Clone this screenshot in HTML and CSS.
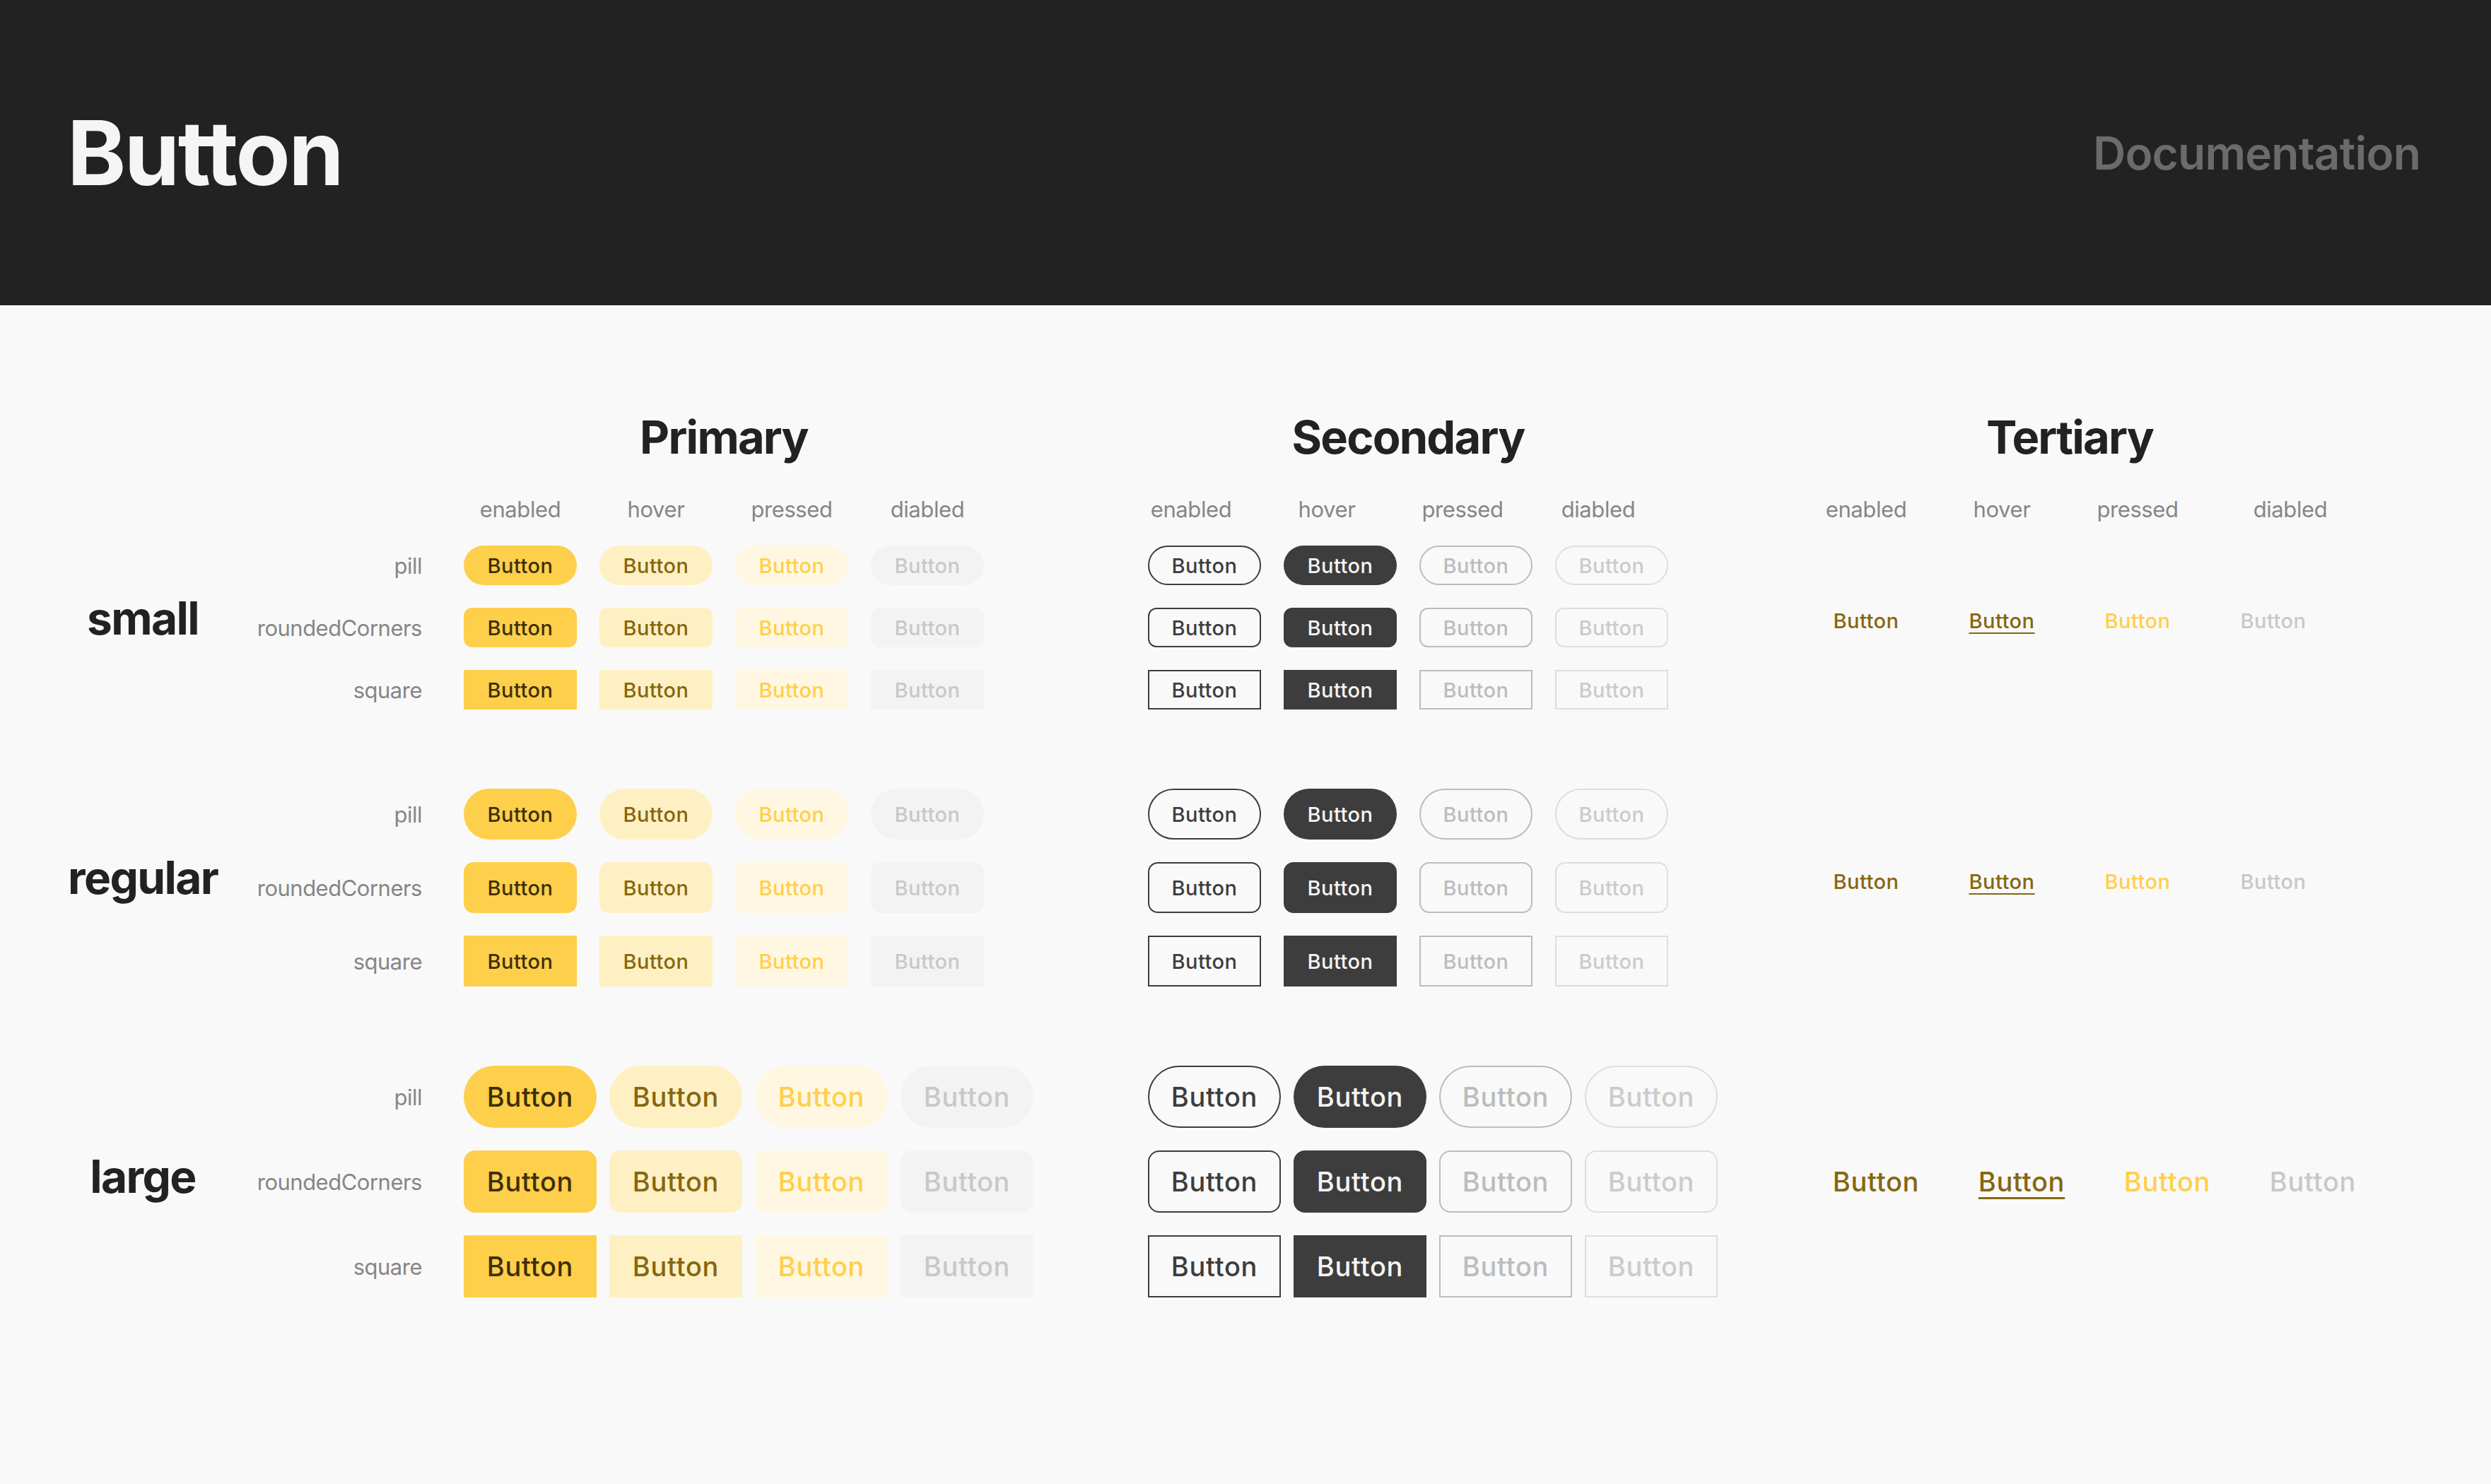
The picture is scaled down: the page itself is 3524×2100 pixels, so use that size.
FILE: index.html
```html
<!DOCTYPE html>
<html lang="en">
<head>
<meta charset="utf-8">
<title>Button</title>
<link rel="stylesheet" href="styles.css">
</head>
<body>
<header class="top">
  <h1 class="top__title">Button</h1>
  <span class="top__link">Documentation</span>
</header>
<main class="sheet">
  <div class="heads">
    <div class="heads__spacer"></div>
    <div class="ghead">
      <h2 class="ghead__title">Primary</h2>
      <div class="states"><span>enabled</span><span>hover</span><span>pressed</span><span>diabled</span></div>
    </div>
    <div class="ghead ghead--secondary">
      <h2 class="ghead__title">Secondary</h2>
      <div class="states states--shift"><span>enabled</span><span>hover</span><span>pressed</span><span>diabled</span></div>
    </div>
    <div class="ghead ghead--tertiary">
      <h2 class="ghead__title">Tertiary</h2>
      <div class="states"><span>enabled</span><span>hover</span><span>pressed</span><span class="states__far">diabled</span></div>
    </div>
  </div>

  <section class="size size--small">
    <div class="size__name">small</div>
    <div class="variants"><span>pill</span><span>roundedCorners</span><span>square</span></div>
    <div class="group group--primary">
      <div class="btn pill p-en">Button</div><div class="btn pill p-hv">Button</div><div class="btn pill p-pr">Button</div><div class="btn pill p-di">Button</div>
      <div class="btn rnd p-en">Button</div><div class="btn rnd p-hv">Button</div><div class="btn rnd p-pr">Button</div><div class="btn rnd p-di">Button</div>
      <div class="btn sq p-en">Button</div><div class="btn sq p-hv">Button</div><div class="btn sq p-pr">Button</div><div class="btn sq p-di">Button</div>
    </div>
    <div class="group group--secondary">
      <div class="btn pill s-en">Button</div><div class="btn pill s-hv">Button</div><div class="btn pill s-pr">Button</div><div class="btn pill s-di">Button</div>
      <div class="btn rnd s-en">Button</div><div class="btn rnd s-hv">Button</div><div class="btn rnd s-pr">Button</div><div class="btn rnd s-di">Button</div>
      <div class="btn sq s-en">Button</div><div class="btn sq s-hv">Button</div><div class="btn sq s-pr">Button</div><div class="btn sq s-di">Button</div>
    </div>
    <div class="group group--tertiary">
      <div class="btn t-en">Button</div><div class="btn t-hv"><span class="t-line">Button</span></div><div class="btn t-pr">Button</div><div class="btn t-di">Button</div>
    </div>
  </section>

  <section class="size size--regular">
    <div class="size__name">regular</div>
    <div class="variants"><span>pill</span><span>roundedCorners</span><span>square</span></div>
    <div class="group group--primary">
      <div class="btn pill p-en">Button</div><div class="btn pill p-hv">Button</div><div class="btn pill p-pr">Button</div><div class="btn pill p-di">Button</div>
      <div class="btn rnd p-en">Button</div><div class="btn rnd p-hv">Button</div><div class="btn rnd p-pr">Button</div><div class="btn rnd p-di">Button</div>
      <div class="btn sq p-en">Button</div><div class="btn sq p-hv">Button</div><div class="btn sq p-pr">Button</div><div class="btn sq p-di">Button</div>
    </div>
    <div class="group group--secondary">
      <div class="btn pill s-en">Button</div><div class="btn pill s-hv">Button</div><div class="btn pill s-pr">Button</div><div class="btn pill s-di">Button</div>
      <div class="btn rnd s-en">Button</div><div class="btn rnd s-hv">Button</div><div class="btn rnd s-pr">Button</div><div class="btn rnd s-di">Button</div>
      <div class="btn sq s-en">Button</div><div class="btn sq s-hv">Button</div><div class="btn sq s-pr">Button</div><div class="btn sq s-di">Button</div>
    </div>
    <div class="group group--tertiary">
      <div class="btn t-en">Button</div><div class="btn t-hv"><span class="t-line">Button</span></div><div class="btn t-pr">Button</div><div class="btn t-di">Button</div>
    </div>
  </section>

  <section class="size size--large">
    <div class="size__name">large</div>
    <div class="variants"><span>pill</span><span>roundedCorners</span><span>square</span></div>
    <div class="group group--primary">
      <div class="btn pill p-en">Button</div><div class="btn pill p-hv">Button</div><div class="btn pill p-pr">Button</div><div class="btn pill p-di">Button</div>
      <div class="btn rnd p-en">Button</div><div class="btn rnd p-hv">Button</div><div class="btn rnd p-pr">Button</div><div class="btn rnd p-di">Button</div>
      <div class="btn sq p-en">Button</div><div class="btn sq p-hv">Button</div><div class="btn sq p-pr">Button</div><div class="btn sq p-di">Button</div>
    </div>
    <div class="group group--secondary">
      <div class="btn pill s-en">Button</div><div class="btn pill s-hv">Button</div><div class="btn pill s-pr">Button</div><div class="btn pill s-di">Button</div>
      <div class="btn rnd s-en">Button</div><div class="btn rnd s-hv">Button</div><div class="btn rnd s-pr">Button</div><div class="btn rnd s-di">Button</div>
      <div class="btn sq s-en">Button</div><div class="btn sq s-hv">Button</div><div class="btn sq s-pr">Button</div><div class="btn sq s-di">Button</div>
    </div>
    <div class="group group--tertiary">
      <div class="btn t-en">Button</div><div class="btn t-hv"><span class="t-line">Button</span></div><div class="btn t-pr">Button</div><div class="btn t-di">Button</div>
    </div>
  </section>
</main>
</body>
</html>
```
FILE: styles.css
```css
* { box-sizing: border-box; }
html, body { margin: 0; padding: 0; }
body {
  background: #f9f9f9;
  font-family: Inter, "Noto Sans", "Liberation Sans", sans-serif;
  color: #222222;
  min-height: 2100px;
}

/* header */
.top {
  height: 432px;
  background: #222222;
  display: flex;
  align-items: center;
  justify-content: space-between;
  padding: 0 100px 0 95px;
}
.top__title {
  margin: 0;
  font-size: 126px;
  line-height: 1;
  font-weight: 700;
  color: #f5f5f5;
  letter-spacing: -2.5px;
}
.top__link {
  font-size: 64px;
  font-weight: 600;
  color: #6b6b6b;
  letter-spacing: -0.8px;
}

/* sheet */
.sheet {
  padding: 147px 0 0 96px;
}
.heads {
  display: flex;
  align-items: flex-start;
}
.heads__spacer {
  width: 560px;
  flex: none;
}
.ghead {
  width: 806px;
  flex: none;
}
.ghead--secondary { margin-left: 162px; }
.ghead--tertiary { margin-left: 130px; }
.ghead__title {
  width: 736px;
  margin: 0 0 42px;
  text-align: center;
  font-size: 65px;
  line-height: 80px;
  font-weight: 700;
  letter-spacing: -1.8px;
  color: #222222;
}
.states {
  display: grid;
  grid-template-columns: repeat(4, 160px);
  column-gap: 32px;
  width: 736px;
  font-size: 31px;
  line-height: 40px;
  letter-spacing: -0.4px;
  color: #868686;
  text-align: center;
}
.states--shift { margin-left: -19px; }
.states__far { padding-left: 48px; }

/* size blocks */
.size {
  display: flex;
  align-items: stretch;
  margin-top: 112px;
}
.size--small { margin-top: 31px; }
.size__name {
  width: 212px;
  flex: none;
  align-self: center;
  text-align: center;
  font-size: 64px;
  line-height: 80px;
  font-weight: 700;
  letter-spacing: -1.6px;
  color: #222222;
}
.size--small .size__name { margin-bottom: 26px; }
.size--regular .size__name { margin-bottom: 28px; }
.size--large .size__name { margin-bottom: 14px; }

.variants {
  width: 289px;
  flex: none;
  display: flex;
  flex-direction: column;
  gap: 32px;
  font-size: 31px;
  letter-spacing: -0.5px;
  color: #868686;
}
.variants span {
  display: flex;
  align-items: center;
  justify-content: flex-end;
  height: 56px;
}
.size--regular .variants span { height: 72px; }
.size--large .variants span { height: 88px; }

.group {
  flex: none;
  display: grid;
  grid-template-columns: repeat(4, 160px);
  column-gap: 32px;
  row-gap: 32px;
  align-content: start;
  width: 806px;
}
.group--primary { margin-left: 59px; }
.group--secondary { margin-left: 162px; }
.group--tertiary {
  margin-left: 130px;
  align-self: center;
  grid-template-columns: repeat(4, 160px);
}
.size--small .group--tertiary { margin-bottom: 20px; }
.size--regular .group--tertiary { margin-bottom: 18px; }
.size--large .group,
.size--large .group--tertiary {
  grid-template-columns: repeat(4, 188px);
  column-gap: 18px;
}

/* buttons */
.btn {
  height: 56px;
  display: flex;
  align-items: center;
  justify-content: center;
  font-size: 29px;
  font-weight: 500;
  letter-spacing: 0.5px;
  white-space: nowrap;
}
.size--regular .btn { height: 72px; }
.size--large .btn { height: 88px; font-size: 38px; letter-spacing: 0.7px; }

.pill { border-radius: 999px; }
.rnd { border-radius: 12px; }
.size--regular .rnd { border-radius: 14px; }
.size--large .rnd { border-radius: 16px; }
.sq { border-radius: 0; }

.p-en { background: #fecf4b; color: #3e2f05; }
.p-hv { background: #fff0c3; color: #86660f; }
.p-pr { background: #fff7e1; color: #ffcf4a; }
.p-di { background: #f3f3f3; color: #c8c8c8; }

.s-en { border: 2px solid #3d3d3d; color: #3d3d3d; }
.s-hv { background: #3d3d3d; color: #f4f4f4; }
.s-pr { border: 2px solid #bcbcbc; color: #bcbcbc; }
.s-di { border: 2px solid #dedede; color: #cbcbcb; }

.t-en { color: #86660f; }
.t-hv { color: #86660f; }
.t-pr { color: #ffcf4a; }
.t-di { color: #c8c8c8; }
.t-line {
  text-decoration: underline;
  text-decoration-thickness: 2px;
  text-underline-offset: 6px;
}
.size--large .t-line {
  text-decoration-thickness: 3px;
  text-underline-offset: 8px;
}
```
